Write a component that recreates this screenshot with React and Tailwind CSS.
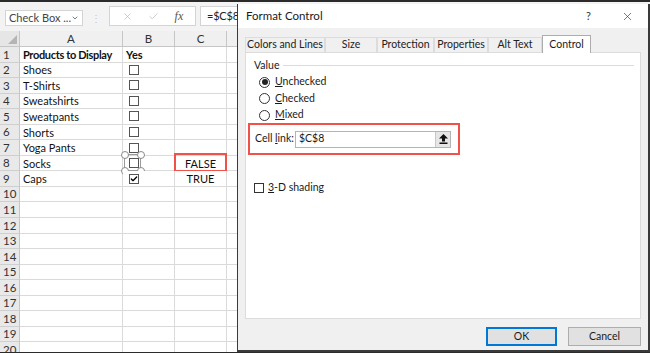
import React from "react";
import { X, Check, ChevronDown } from "lucide-react";

const cellFont = { fontFamily: "Lato, 'Liberation Sans', sans-serif" };
const uiFont = { fontFamily: "Lato, 'Noto Sans', sans-serif" };

const sheetRows = [
  { a: "Products to Display", b: "Yes", bold: true },
  { a: "Shoes", box: true },
  { a: "T-Shirts", box: true },
  { a: "Sweatshirts", box: true },
  { a: "Sweatpants", box: true },
  { a: "Shorts", box: true },
  { a: "Yoga Pants", box: true },
  { a: "Socks", box: true, selected: true, c: "FALSE", mark: true },
  { a: "Caps", box: true, checked: true, c: "TRUE" },
];

// fill up to row 20
for (let i = sheetRows.length; i < 20; i++) sheetRows.push({});

function Handle({ className }) {
  return (
    <span
      className={
        "absolute w-[8px] h-[8px] rounded-full border border-[#8a8a8a] bg-white " +
        className
      }
    />
  );
}

function FormulaBar() {
  return (
    <div className="h-[29px] flex items-end pb-[5px] bg-[#f3f3f3]" style={cellFont}>
      {/* name box */}
      <div className="ml-[5px] w-[78px] h-[16px] bg-white border border-[#d4d4d4] flex items-center justify-between pl-[3px] pr-[3px] text-[11px] text-[#444] whitespace-nowrap">
        <span>Check Box ...</span>
        <ChevronDown className="w-[8px] h-[8px] text-[#777]" strokeWidth={3} />
      </div>
      <div className="w-[26px] h-[16px] flex items-center justify-center text-[#c4c4c4] text-[10px] leading-none">
        ⋮
      </div>
      {/* cancel / enter / fx */}
      <div className="w-[87px] h-[20px] bg-white border border-[#d4d4d4] flex items-center justify-around px-[4px] text-[#b8b8b8]">
        <X className="w-[11px] h-[11px]" strokeWidth={1.5} />
        <Check className="w-[11px] h-[11px]" strokeWidth={1.5} />
        <span className="text-[12px] italic text-[#555]" style={{ fontFamily: "'Liberation Serif', serif" }}>
          fx
        </span>
      </div>
      <div className="ml-[4px] flex-1 h-[20px] bg-white border border-[#d4d4d4] flex items-center pl-[6px] text-[11px] text-[#222] tracking-[-0.2px]">
        =$C$8
      </div>
    </div>
  );
}

function Sheet() {
  return (
    <div className="grid grid-cols-[20px_103px_52px_52px_1fr] text-[11px] text-[#111]" style={cellFont}>
      {/* column headers */}
      <div className="h-[16px] bg-[#e6e6e6] border-r border-b border-[#c6c6c6] relative">
        <span className="absolute right-[2px] bottom-[2px] w-0 h-0 border-l-[9px] border-l-transparent border-b-[9px] border-b-[#b5b5b5]" />
      </div>
      {["A", "B", "C", ""].map((h, i) => (
        <div
          key={i}
          className="h-[16px] bg-[#f0f0f0] border-r border-b border-[#c6c6c6] flex items-center justify-center text-[#333] text-[11.5px]"
        >
          {h}
        </div>
      ))}

      {sheetRows.map((r, i) => (
        <React.Fragment key={i}>
          <div className="h-[15.55px] bg-[#e9e9e9] border-b border-[#cfcfcf] border-r border-r-[#c6c6c6] flex items-center pl-[3px] text-[#333] leading-none text-[11.5px]">
            {i + 1}
          </div>
          <div
            className={
              "h-[15.55px] bg-white border-r border-b border-[#dadada] flex items-center pl-[3px] leading-none whitespace-nowrap " +
              (r.bold ? "font-bold tracking-[-0.35px]" : "")
            }
          >
            {r.a}
          </div>
          <div
            className={
              "h-[15.55px] bg-white border-r border-b border-[#dadada] flex items-center leading-none relative " +
              (r.bold ? "font-bold pl-[3px]" : "pl-[6px]")
            }
          >
            {r.b}
            {r.box && (
              <span className="w-[10px] h-[10px] border border-[#555] bg-white flex items-center justify-center">
                {r.checked && <Check className="w-[8px] h-[8px] text-black" strokeWidth={4} />}
              </span>
            )}
            {r.selected && (
              <>
                <span className="absolute left-[1px] top-[-2px] w-[17px] h-[17px] border border-[#9a9a9a]" />
                <Handle className="left-[-2px] top-[-5px]" />
                <Handle className="left-[14px] top-[-5px]" />
                <Handle className="left-[-2px] top-[11px]" />
                <Handle className="left-[14px] top-[11px]" />
              </>
            )}
          </div>
          <div className="h-[15.55px] bg-white border-r border-b border-[#dadada] flex items-center justify-center leading-none relative">
            {r.c}
            {r.mark && (
              <span className="absolute left-[-1px] right-[-1px] top-[-3px] bottom-[-2px] border-2 border-[#f0524a]" />
            )}
          </div>
          <div className="h-[15.55px] bg-white border-b border-[#dadada]" />
        </React.Fragment>
      ))}
    </div>
  );
}

const tabs = [
  { label: "Colors and Lines", w: "w-[80px]" },
  { label: "Size", w: "w-[52px]" },
  { label: "Protection", w: "w-[57px]" },
  { label: "Properties", w: "w-[54px]" },
  { label: "Alt Text", w: "w-[54px]" },
];

function Radio({ on, children }) {
  return (
    <div className="h-[16.5px] flex items-center gap-[5px] pl-[13px]">
      <span className="w-[11px] h-[11px] rounded-full border border-[#333] bg-white flex items-center justify-center">
        {on && <span className="w-[6px] h-[6px] rounded-full bg-[#222]" />}
      </span>
      <span>{children}</span>
    </div>
  );
}

function FormatControl() {
  return (
    <div
      className="absolute left-[237px] top-[2px] bottom-0 right-0 flex flex-col border-l border-r-2 border-b-2 border-[#3a3a3a] text-[10.5px] text-[#1a1a1a] whitespace-nowrap"
      style={uiFont}
    >
      {/* title bar */}
      <div className="h-[24px] bg-white flex items-center pl-[8px] pr-[14px] text-[11.5px]">
        <span className="flex-1">Format Control</span>
        <span className="mr-[30px] text-[#333] text-[11px]">?</span>
        <X className="w-[13px] h-[13px] text-[#333]" strokeWidth={1.2} />
      </div>

      <div className="flex-1 bg-[#f0f0f0] px-[7px] pt-[6px]">
        {/* tabs */}
        <div className="h-[18px] flex items-end">
          {tabs.map((t) => (
            <div
              key={t.label}
              className={t.w + " h-[15px] border border-b-0 border-[#dcdcdc] bg-[#f0f0f0] flex items-center justify-center text-[#222]"}
            >
              {t.label}
            </div>
          ))}
          <div className="w-[49px] h-[18px] border border-b-0 border-[#adadad] bg-white flex items-center justify-center relative top-[1px]">
            Control
          </div>
        </div>

        {/* panel */}
        <div className="w-[396px] h-[267px] bg-white border border-[#dcdcdc] pt-[5px] pr-[6px]">
          <div className="flex items-center pl-[8px] gap-[4px]">
            <span>Value</span>
            <span className="flex-1 h-px bg-[#dcdcdc]" />
          </div>
          <div>
            <Radio on>
              <u>U</u>nchecked
            </Radio>
            <Radio>
              <u>C</u>hecked
            </Radio>
            <Radio>
              <u>M</u>ixed
            </Radio>
          </div>

          {/* cell link */}
          <div className="ml-[2px] mt-[0px] w-[212px] h-[32px] border-2 border-[#f0524a] flex items-center pl-[5px] pr-[7px]">
            <span className="w-[40px]">
              Cell <u>l</u>ink:
            </span>
            <div className="flex-1 h-[17px] border border-[#b4b4b4] flex items-center justify-between pl-[3px]">
              <span>$C$8</span>
              <span className="w-[15px] h-[15px] bg-[#e6e6e6] border-l border-[#c8c8c8] flex items-center justify-center">
                <svg width="9" height="10" viewBox="0 0 9 10">
                  <path d="M4.5 0 L9 4.5 L6 4.5 L6 7.5 L3 7.5 L3 4.5 L0 4.5 Z" fill="#111" />
                  <rect x="0.5" y="8.5" width="8" height="1.5" fill="#111" />
                </svg>
              </span>
            </div>
          </div>

          <div className="mt-[25px] pl-[8px] flex items-center gap-[4px]">
            <span className="w-[10px] h-[10px] border border-[#333] bg-white" />
            <span>
              <u>3</u>-D shading
            </span>
          </div>
        </div>

        {/* buttons */}
        <div className="mt-[8px] flex justify-end gap-[11px]">
          <div className="w-[71px] h-[19px] bg-[#e1e1e1] border-2 border-[#0078d7] flex items-center justify-center">
            OK
          </div>
          <div className="w-[73px] h-[19px] bg-[#e1e1e1] border border-[#adadad] flex items-center justify-center">
            Cancel
          </div>
        </div>
      </div>
    </div>
  );
}

export default function App() {
  return (
    <div className="w-[650px] h-[353px] relative overflow-hidden bg-white border-t-2 border-b border-[#2b2b2b]">
      <FormulaBar />
      <Sheet />
      <FormatControl />
    </div>
  );
}
